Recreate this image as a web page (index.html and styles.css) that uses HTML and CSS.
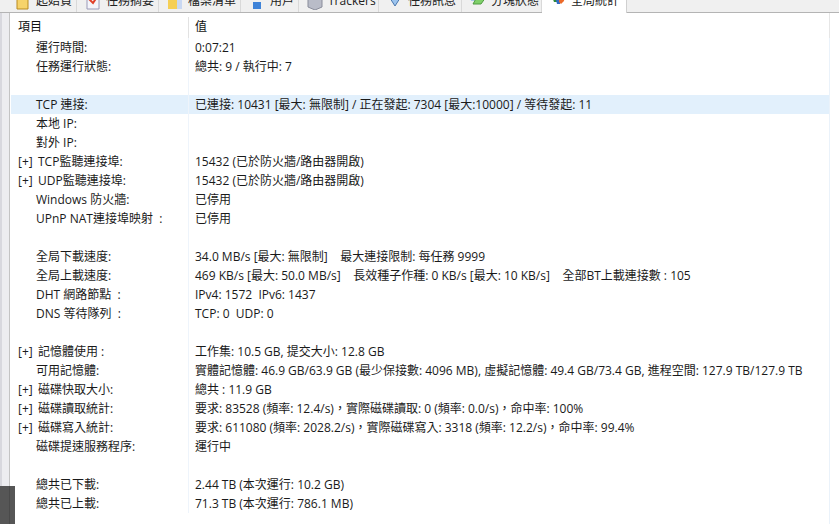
FILE: index.html
```html
<!DOCTYPE html>
<html lang="zh-Hant">
<head>
<meta charset="utf-8">
<title>全局統計</title>
<link rel="stylesheet" href="styles.css">
</head>
<body>
<div class="app">
  <div class="tabs">
    <div class="tab t1"><svg class="ico" viewBox="0 0 16 16"><path d="M2 1h11v14H2z" fill="#f6d36b" stroke="#b98a20"/></svg><span>起始頁</span></div>
    <div class="tab t2"><svg class="ico" viewBox="0 0 16 16"><path d="M2 1h12v14H2z" fill="#f4f4fa" stroke="#9a9ab8"/><path d="M4 5l4 4 4-6" fill="none" stroke="#e0402a" stroke-width="2"/></svg><span>任務摘要</span></div>
    <div class="tab t3"><svg class="ico" viewBox="0 0 16 16"><path d="M1 0h9v15H1z" fill="#f5cf55"/><path d="M10 2h5v13h-5z" fill="#c9d8f2"/></svg><span>檔案清單</span></div>
    <div class="tab t4"><svg class="ico" viewBox="0 0 16 16"><circle cx="8" cy="3" r="3" fill="#5a6f9a"/><path d="M4 8h8v7H4z" fill="#3f83d8"/></svg><span>用戶</span></div>
    <div class="tab t5"><svg class="ico" viewBox="0 0 16 16"><path d="M1 2l7-3 7 3v11l-7 3-7-3z" fill="#b9bcc8" stroke="#8a8d9b"/></svg><span>Trackers</span></div>
    <div class="tab t6"><svg class="ico" viewBox="0 0 16 16"><path d="M1 1h14L8 12z" fill="#9cc4ee" stroke="#4a78ae"/></svg><span>任務訊息</span></div>
    <div class="tab t7"><svg class="ico" viewBox="0 0 16 16"><path d="M1 0h6L5 7H1z" fill="#a9c9ea"/><path d="M7 3h9l-5 7H3z" fill="#7fd06a" stroke="#4e9a40"/></svg><span>分塊狀態</span></div>
    <div class="tab t8 active"><svg class="ico" viewBox="0 0 16 16"><path d="M1 0h6v8H4z" fill="#2f8a3a"/><path d="M5 2h5v8l-3 0z" fill="#2f6bc8"/><path d="M9 0h6l-1 7-3 3-2-2z" fill="#ec6a2a"/></svg><span>全局統計</span></div>
  </div>
  <div class="body">
    <div class="gutter"><div class="dark"></div></div>
    <div class="panel">
      <div class="head">
        <div class="c1">項目</div>
        <div class="c2">值</div>
      </div>
      <div class="list">
        <div class="row"><div class="c1"><span class="pre"></span>運行時間:</div><div class="c2">0:07:21</div></div>
        <div class="row"><div class="c1"><span class="pre"></span>任務運行狀態:</div><div class="c2">總共: 9 / 執行中: 7</div></div>
        <div class="row"><div class="c1"></div><div class="c2"></div></div>
        <div class="row hl"><div class="c1"><span class="pre"></span>TCP 連接:</div><div class="c2">已連接: 10431 [最大: 無限制] / 正在發起: 7304 [最大:10000] / 等待發起: 11</div></div>
        <div class="row"><div class="c1"><span class="pre"></span>本地 IP:</div><div class="c2"></div></div>
        <div class="row"><div class="c1"><span class="pre"></span>對外 IP:</div><div class="c2"></div></div>
        <div class="row"><div class="c1"><span class="pre plus">[+]</span>TCP監聽連接埠:</div><div class="c2">15432 (已於防火牆/路由器開啟)</div></div>
        <div class="row"><div class="c1"><span class="pre plus">[+]</span>UDP監聽連接埠:</div><div class="c2">15432 (已於防火牆/路由器開啟)</div></div>
        <div class="row"><div class="c1"><span class="pre"></span>Windows 防火牆:</div><div class="c2">已停用</div></div>
        <div class="row"><div class="c1"><span class="pre"></span>UPnP NAT連接埠映射 &nbsp;:</div><div class="c2">已停用</div></div>
        <div class="row"><div class="c1"></div><div class="c2"></div></div>
        <div class="row"><div class="c1"><span class="pre"></span>全局下載速度:</div><div class="c2">34.0 MB/s [最大: 無限制] &nbsp;&nbsp; 最大連接限制: 每任務 9999</div></div>
        <div class="row"><div class="c1"><span class="pre"></span>全局上載速度:</div><div class="c2">469 KB/s [最大: 50.0 MB/s] &nbsp;&nbsp; 長效種子作種: 0 KB/s [最大: 10 KB/s] &nbsp;&nbsp; 全部BT上載連接數 : 105</div></div>
        <div class="row"><div class="c1"><span class="pre"></span>DHT 網路節點 &nbsp;:</div><div class="c2">IPv4: 1572 &nbsp;IPv6: 1437</div></div>
        <div class="row"><div class="c1"><span class="pre"></span>DNS 等待隊列 &nbsp;:</div><div class="c2">TCP: 0 &nbsp;UDP: 0</div></div>
        <div class="row"><div class="c1"></div><div class="c2"></div></div>
        <div class="row"><div class="c1"><span class="pre plus">[+]</span>記憶體使用 :</div><div class="c2">工作集: 10.5 GB, 提交大小: 12.8 GB</div></div>
        <div class="row"><div class="c1"><span class="pre"></span>可用記憶體:</div><div class="c2">實體記憶體: 46.9 GB/63.9 GB (最少保接數: 4096 MB), 虛擬記憶體: 49.4 GB/73.4 GB, 進程空間: 127.9 TB/127.9 TB</div></div>
        <div class="row"><div class="c1"><span class="pre plus">[+]</span>磁碟快取大小:</div><div class="c2">總共 : 11.9 GB</div></div>
        <div class="row"><div class="c1"><span class="pre plus">[+]</span>磁碟讀取統計:</div><div class="c2">要求: 83528 (頻率: 12.4/s)，實際磁碟讀取: 0 (頻率: 0.0/s)，命中率: 100%</div></div>
        <div class="row"><div class="c1"><span class="pre plus">[+]</span>磁碟寫入統計:</div><div class="c2">要求: 611080 (頻率: 2028.2/s)，實際磁碟寫入: 3318 (頻率: 12.2/s)，命中率: 99.4%</div></div>
        <div class="row"><div class="c1"><span class="pre"></span>磁碟提速服務程序:</div><div class="c2">運行中</div></div>
        <div class="row"><div class="c1"></div><div class="c2"></div></div>
        <div class="row"><div class="c1"><span class="pre"></span>總共已下載:</div><div class="c2">2.44 TB (本次運行: 10.2 GB)</div></div>
        <div class="row"><div class="c1"><span class="pre"></span>總共已上載:</div><div class="c2">71.3 TB (本次運行: 786.1 MB)</div></div>
      </div>
    </div>
  </div>
</div>
</body>
</html>
```
FILE: styles.css
```css
html, body {
  margin: 0;
  height: 100%;
  overflow: hidden;
  background: #fff;
}
.app {
  width: 839px;
  height: 524px;
  display: flex;
  flex-direction: column;
  font: 12px/19px "Open Sans", "Noto Sans CJK TC", sans-serif;
  color: #1a1a1a;
  overflow: hidden;
}
.tabs {
  height: 13px;
  flex: none;
  display: flex;
  align-items: flex-end;
  background: #f0f0f0;
  border-bottom: 1px solid #b4b4b4;
  box-sizing: border-box;
  padding-left: 7px;
}
.tab {
  height: 22px;
  flex: none;
  display: flex;
  align-items: flex-start;
  gap: 5px;
  box-sizing: border-box;
  border-right: 1px solid #d9d9d9;
  padding: 0 0 0 8px;
  font-size: 12px;
  line-height: 14px;
  color: #222;
  white-space: nowrap;
}
.ico { width: 16px; height: 16px; flex: none; margin-top: 4px; }
.tab span { margin-top: 4px; }
.t1 { width: 70px; }
.t2 { width: 82px; }
.t3 { width: 82px; }
.t4 { width: 58px; }
.t5 { width: 80px; }
.t6 { width: 83px; }
.t7 { width: 80px; }
.t8 { width: 85px; }
.active {
  background: #fff;
  height: 23px;
  margin-bottom: -1px;
  border-right: 1px solid #d0d0d0;
  position: relative;
}
.body {
  flex: 1;
  display: flex;
  min-height: 0;
}
.gutter {
  width: 10px;
  flex: none;
  background: linear-gradient(90deg, #d8d8de 0 2px, #ededf0 2px);
  border-right: 1px solid #c4c4c4;
  box-sizing: border-box;
  position: relative;
}
.dark {
  position: absolute;
  left: 0;
  top: 473px;
  width: 15px;
  height: 38px;
  background: #565656 linear-gradient(#4a4a4a, #4a4a4a) 9px 0 / 1px 100% no-repeat;
  z-index: 2;
}
.panel {
  flex: 1;
  min-width: 0;
  padding-left: 1px;
  background: #fff;
}
.head {
  display: flex;
  height: 25px;
  padding-top: 4px;
  box-sizing: border-box;
  color: #111;
  width: 819px;
  border-right: 1px solid #e6e6e6;
}
.head .c2 { border-left-color: #e2e2e2; }
.list {
  width: 819px;
  height: 486px;
  box-sizing: border-box;
  border-right: 1px solid #eaf2fa;
}
.row {
  display: flex;
  height: 19px;
}
.hl { background: #e2f0fc; }
.c1 {
  width: 177px;
  flex: none;
  display: flex;
  padding-left: 7px;
  box-sizing: border-box;
  white-space: pre;
}
.pre { width: 18px; flex: none; }
.plus { width: 20px; }
.c2 {
  flex: 1;
  min-width: 0;
  padding-left: 6px;
  white-space: nowrap;
  border-left: 1px solid #eef4fb;
}
```
